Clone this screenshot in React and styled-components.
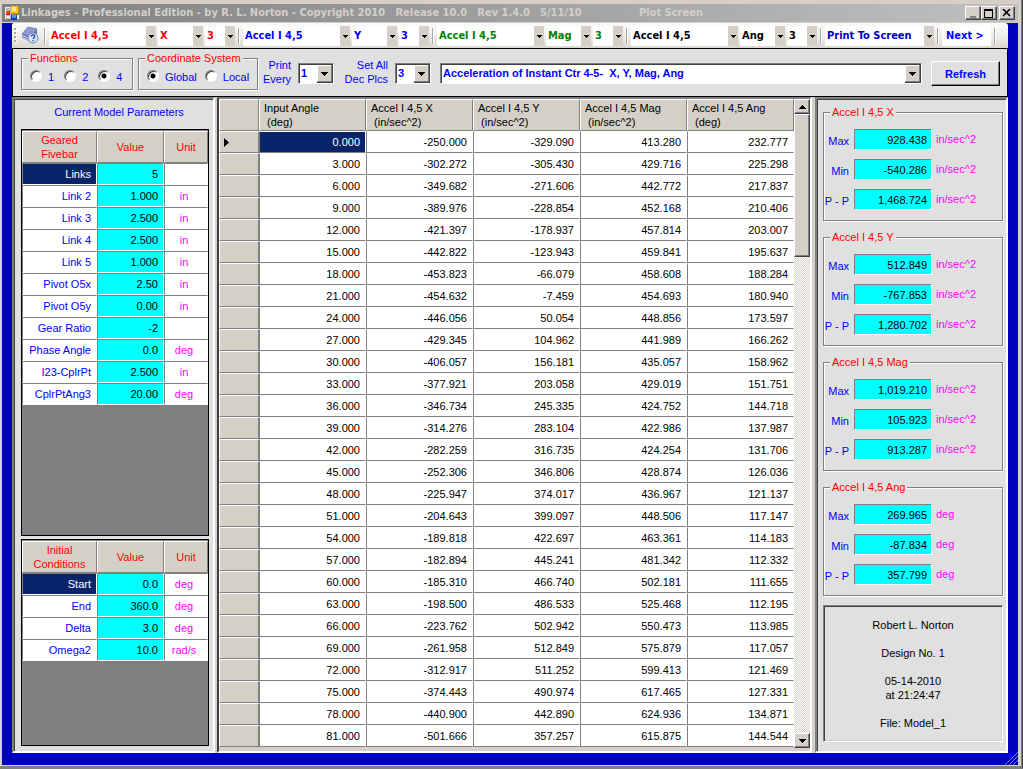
import React from 'react';
import styled, { createGlobalStyle } from 'styled-components';

const c = {
  face: '#d4d0c8', panel: '#e0e0e0', blue: '#0000c0', ink: '#0000ff', gray: '#808080',
  dark: '#404040', navy: '#0a246a', cyan: '#00ffff', red: '#ff0000', unit: '#ff00ff',
};
const ui = '"Liberation Sans", Arial, sans-serif';
const tahoma = '"DejaVu Sans Condensed", "DejaVu Sans", sans-serif';

const Global = createGlobalStyle`
  *, *::before, *::after { box-sizing: border-box; }
  body { margin: 0; font: 11px/14px ${ui}; color: #000; background: ${c.face}; }
  input, select, button { font: inherit; color: inherit; margin: 0; border-radius: 0; }
`;

const Window = styled.div`
  min-height: 100vh;
  display: flex;
  flex-direction: column;
  background: ${c.face};
  border-right: 1px solid ${c.dark};
  border-bottom: 2px solid ${c.gray};
  padding: 1px 4px 2px 2px;
  box-shadow: inset -1px -1px 0 ${c.gray};
`;
const TitleBar = styled.header`
  display: flex;
  align-items: center;
  height: 18px;
  margin-top: 3px;
  padding: 0 3px;
  background: linear-gradient(to right, #808080, #c0c0c0);
  color: ${c.face};
  font: bold 11px/18px ${tahoma};
  white-space: pre;
`;
const AppTitle = styled.h1`
  margin: 0 0 0 2px;
  width: 618px;
  font: inherit;
  font-size: 11px;
`;
const ScreenTitle = styled.span`
  flex: 1;
`;
const WinButton = styled.button`
  display: grid;
  place-items: center;
  width: 16px;
  height: 14px;
  padding: 0;
  margin-left: ${(p) => (p.$apart ? 2 : 0)}px;
  color: #000;
  background: ${c.face};
  border: 1px solid;
  border-color: #fff ${c.dark} ${c.dark} #fff;
  box-shadow: inset -1px -1px 0 ${c.gray};
`;
const Frame = styled.div`
  flex: 1;
  display: flex;
  flex-direction: column;
  position: relative;
  padding: 0 10px 12px;
  background: ${c.blue};
  margin-top: 1px;
`;
const ResizeGrip = styled.svg`
  position: absolute;
  right: 0;
  bottom: 0;
`;
const ToolBar = styled.nav`
  display: flex;
  align-items: center;
  height: 25px;
  padding-left: 2px;
  overflow: hidden;
  border-radius: 2px 3px 0 0;
  background: linear-gradient(#fafaf9, #f0efea 50%, #dad7cf);
  font: bold 11px/20px ${tahoma};
`;
const HelpButton = styled.button`
  display: flex;
  width: 20px;
  height: 20px;
  padding: 0;
  margin-left: 3px;
  border: 0;
  background: none;
`;
const Separator = styled.span`
  flex: none;
  width: 2px;
  height: 16px;
  margin: 0 3px;
  background: #a6a6a6;
  border-right: 1px solid #fff;
`;
const ToolGroup = styled.div`
  display: flex;
  gap: 2px;
  color: ${(p) => p.$color};
`;
const FlatCombo = styled.span`
  display: grid;
  width: ${(p) => p.$w}px;
  height: 20px;
  background: #fff;
  select, svg { grid-area: 1 / 1; }
  select {
    appearance: none;
    width: 100%;
    height: 20px;
    padding: 0 12px 0 2px;
    border: 0;
    background: none;
  }
  svg { justify-self: end; pointer-events: none; }
`;
const NextButton = styled.button`
  width: 49px;
  height: 21px;
  padding: 0 0 0 4px;
  text-align: left;
  border: 0;
  background: #fff;
  color: ${c.ink};
`;
const Options = styled.section`
  display: flex;
  align-items: flex-start;
  height: 49px;
  padding: 2px 7px 0 8px;
  background: ${c.panel};
  border: 1px solid #000;
  color: ${c.ink};
`;
const Group = styled.fieldset`
  min-width: 0;
  margin: 0;
  padding: 0;
  border: 1px solid ${c.gray};
  box-shadow: 1px 1px 0 #fff, inset 1px 1px 0 #fff;
  legend {
    margin-left: 6px;
    padding: 0 2px;
    color: ${c.red};
    background: ${c.panel};
    line-height: 14px;
  }
`;
const RadioGroup = styled(Group)`
  width: ${(p) => p.$w}px;
  height: 39px;
  margin-right: 5px;
`;
const RadioRow = styled.div`
  display: flex;
  gap: ${(p) => p.$gap}px;
  padding: 3px 0 0 8px;
`;
const Radio = styled.label`
  display: flex;
  align-items: center;
  gap: 6px;
  input {
    appearance: none;
    width: 12px;
    height: 12px;
    border-radius: 50%;
    border: 1px solid;
    border-color: ${c.gray} #fff #fff ${c.gray};
    background: #fff;
    box-shadow: inset 1px 1px 0 ${c.dark};
  }
  input:checked { background: radial-gradient(circle, #000 2px, #fff 3px); }
  span { padding-top: 2px; }
`;
const SideLabel = styled.label`
  width: ${(p) => p.$w}px;
  padding-top: 7px;
  margin-right: 7px;
  text-align: right;
`;
const Combo = styled.span`
  display: grid;
  flex: ${(p) => (p.$w ? `none` : `1`)};
  width: ${(p) => (p.$w ? `${p.$w}px` : `auto`)};
  height: 21px;
  margin: 12px 9px 0 0;
  background: #fff;
  border: 1px solid;
  border-color: ${c.gray} #fff #fff ${c.gray};
  box-shadow: inset 1px 1px 0 ${c.dark};
  font-weight: bold;
  select, svg { grid-area: 1 / 1; }
  select {
    appearance: none;
    width: 100%;
    height: 18px;
    padding: 0 16px 0 2px;
    border: 0;
    background: none;
    white-space: pre;
  }
  svg { justify-self: end; align-self: center; pointer-events: none; }
`;
const RefreshButton = styled.button`
  width: 69px;
  height: 25px;
  margin-top: 10px;
  padding: 0;
  font-weight: bold;
  background: ${c.panel};
  border: 1px solid;
  border-color: #fff #000 #000 #fff;
  box-shadow: inset -1px -1px 0 ${c.gray};
`;
const Body = styled.main`
  flex: 1;
  display: flex;
  gap: 2px;
  background: ${c.face};
`;
const Panel = styled.section`
  display: flex;
  flex-direction: column;
  width: ${(p) => p.$w}px;
  background: ${c.panel};
  border: 2px solid;
  border-color: ${c.gray} #fff #fff ${c.gray};
  box-shadow: inset 1px 1px 0 ${c.dark};
`;
const LeftPanel = styled(Panel)`
  padding: 0 4px 5px 7px;
  h2 {
    margin: 0;
    padding: 6px 0 10px 8px;
    font: inherit;
    text-align: center;
    color: ${c.ink};
  }
`;
const GridBox = styled.div`
  flex: ${(p) => (p.$grow ? `1` : `0 0 207px`)};
  margin-bottom: ${(p) => (p.$grow ? 3 : 0)}px;
  background: ${c.gray};
  border: 1px solid #000;
  padding-top: 1px;
`;
const Table = styled.table`
  width: 100%;
  table-layout: fixed;
  border-collapse: separate;
  border-spacing: 0;
`;
const Head = styled.th`
  height: 32px;
  padding: ${(p) => (p.$left ? `0 0 0 4px` : `0`)};
  font-weight: normal;
  text-align: ${(p) => (p.$left ? `left` : `center`)};
  white-space: pre;
  color: ${(p) => (p.$left ? `#000` : c.red)};
  background: ${c.face};
  border: 1px solid;
  border-color: #fff ${c.gray} ${c.gray} #fff;
`;
const cell = `
  height: 22px;
  font-weight: normal;
  border: 1px solid;
`;
const Name = styled.th`
  ${cell}
  padding: 0 5px 0 0;
  text-align: right;
  color: ${(p) => (p.$on ? `#fff` : c.ink)};
  background: ${(p) => (p.$on ? c.navy : `#fff`)};
  border-color: ${c.gray} #fff #fff ${c.gray};
`;
const Value = styled.td`
  ${cell}
  padding: 0 5px 0 0;
  text-align: right;
  background: ${c.cyan};
  border-color: ${c.gray} #fff #fff ${c.gray};
`;
const Unit = styled.td`
  ${cell}
  padding: 0 4px 0 0;
  text-align: center;
  color: ${c.unit};
  background: #fff;
  border-color: ${c.gray} #fff #fff ${c.gray};
`;
const DataPanel = styled.section`
  flex: 1;
  display: flex;
  align-items: flex-start;
  background: ${c.face};
  border: 2px solid;
  border-color: ${c.gray} #fff #fff ${c.dark};
  padding-bottom: 3px;
  margin-right: 1px;
`;
const DataTable = styled(Table)`
  flex: 1;
  min-width: 0;
`;
const RowHead = styled.th`
  ${cell}
  padding: 0 0 0 3px;
  text-align: left;
  line-height: 8px;
  background: ${c.face};
  border-color: #fff ${c.gray} ${c.gray} #fff;
`;
const Data = styled.td`
  ${cell}
  padding: 0 5px 0 0;
  text-align: right;
  color: ${(p) => (p.$on ? `#fff` : `#000`)};
  background: ${(p) => (p.$on ? c.navy : `#fff`)};
  border-color: #fff #fff ${c.gray} ${c.gray};
`;
const ScrollBar = styled.div`
  align-self: stretch;
  display: flex;
  flex: none;
  flex-direction: column;
  width: 16px;
  background: repeating-conic-gradient(#fff 0 25%, ${c.face} 0 50%) 0 0 / 2px 2px;
`;
const raised = `
  background: ${c.face};
  border: 1px solid;
  border-color: #fff ${c.dark} ${c.dark} #fff;
  box-shadow: inset -1px -1px 0 ${c.gray};
`;
const ScrollButton = styled.button`
  ${raised}
  display: grid;
  place-items: center;
  width: 16px;
  height: 15px;
  padding: 0;
`;
const Thumb = styled.div`
  ${raised}
  height: 143px;
  margin-bottom: auto;
`;
const RightPanel = styled(Panel)`
  padding: 6px 3px 9px 6px;
`;
const StatGroup = styled(Group)`
  height: 116px;
  margin-bottom: 9px;
`;
const StatRow = styled.div`
  display: grid;
  grid-template-columns: 26px 78px 1fr;
  column-gap: 4px;
  padding-top: 9px;
  &:first-of-type { padding-top: 10px; }
  label {
    display: flex;
    justify-content: flex-end;
    padding: 5px 1px 0 0;
    white-space: nowrap;
    color: ${c.ink};
  }
  input {
    width: 78px;
    height: 21px;
    padding: 0 4px;
    text-align: right;
    background: ${c.cyan};
    border: 1px solid;
    border-color: ${c.gray} #fff #fff ${c.gray};
  }
  span {
    padding-top: 3px;
    color: ${c.unit};
  }
`;
const Info = styled.address`
  flex: 1;
  padding: 12px 0 6px;
  font-style: normal;
  text-align: center;
  border: 1px solid;
  border-color: ${c.gray} #fff #fff ${c.gray};
  box-shadow: inset 1px 1px 0 ${c.dark}, inset -1px -1px 0 ${c.face};
  p { margin: 0 0 14px; }
  p:last-child { margin: 0; }
`;

const FlatArrow = () => (
  <svg width="10" height="20" shapeRendering="crispEdges">
    <rect width="10" height="20" fill={c.face} />
    <path d="M3 9h5v1h-1v1h-1v1h-1v-1h-1v-1h-1z" />
  </svg>
);
const ComboArrow = () => (
  <svg width="16" height="18" shapeRendering="crispEdges">
    <rect width="16" height="18" fill={c.dark} />
    <rect width="15" height="17" fill="#808080" />
    <rect width="14" height="16" fill="#fff" />
    <rect x="1" y="1" width="13" height="15" fill={c.face} />
    <path d="M4 7h7v1h-1v1h-1v1h-1v1h-1v-1h-1v-1h-1v-1h-1z" />
  </svg>
);
const Triangle = ({ up }) => (
  <svg width="7" height="4" shapeRendering="crispEdges">
    <path d={up ? 'M3 0h1v1h1v1h1v1h1v1h-7v-1h1v-1h1v-1h1z' : 'M0 0h7v1h-1v1h-1v1h-1v1h-1v-1h-1v-1h-1v-1h-1z'} />
  </svg>
);

const AppIcon = () => (
  <svg width="14" height="14" shapeRendering="crispEdges">
    <path d="M0 1h6v12h-6z" fill="#b8b8b8" />
    <path d="M0 1h5v1h-4v11h-1z" fill="#f4f4f4" />
    <rect x="1" y="5" width="4" height="4" fill="#c01808" />
    <rect x="1" y="5" width="3" height="3" fill="#f04828" />
    <rect x="2" y="10" width="3" height="2" fill="#f0f0f0" />
    <rect x="6" y="0" width="8" height="8" fill="#c88c00" />
    <rect x="6" y="0" width="7" height="7" fill="#fcc020" />
    <rect x="7" y="1" width="4" height="4" fill="#ffe888" />
    <rect x="6" y="9" width="6" height="5" fill="#1038b0" />
    <rect x="7" y="9" width="4" height="3" fill="#5090f0" />
    <path d="M12 9h2v4h-2z" fill="#f4f4f4" />
  </svg>
);
const HelpIcon = () => (
  <svg width="18" height="18" viewBox="0 0 18 18">
    <path d="M1 8l6-7 9 2v6l-6 7-9-4z" fill="#6670b4" />
    <path d="M1 8l6-7 9 2-6 8z" fill="#9098d0" stroke="#7078b8" strokeWidth=".7" />
    <path d="M1 9.500l8 3M1 11.500l8 3" fill="none" stroke="#dfe3f6" strokeWidth=".9" />
    <circle cx="12" cy="12" r="5" fill="#dce8fa" stroke="#6484c4" />
    <path d="M10.400 10.600c0-2.200 3.300-2.100 3.300-.2 0 1.300-1.600 1.200-1.600 2.600M12.100 14v1.200" fill="none" stroke="#203c90" strokeWidth="1.300" />
  </svg>
);
const Grip = () => (
  <svg width="4" height="18" shapeRendering="crispEdges">
    {[1, 5, 9, 13].map((y) => (
      <g key={y}>
        <rect x="1" y={y + 1} width="2" height="2" fill="#fff" />
        <rect y={y} width="2" height="2" fill="#a8a69f" />
      </g>
    ))}
  </svg>
);

const FlatSelect = ({ w, label, value }) => (
  <FlatCombo $w={w}>
    <select aria-label={label} defaultValue={value}><option>{value}</option></select>
    <FlatArrow />
  </FlatCombo>
);

const plots = [['X', '#ff0000'], ['Y', '#0000ff'], ['Mag', '#008000'], ['Ang', '#000000']];

const params = [
  ['Links', '5', ''], ['Link 2', '1.000', 'in'], ['Link 3', '2.500', 'in'], ['Link 4', '2.500', 'in'],
  ['Link 5', '1.000', 'in'], ['Pivot O5x', '2.50', 'in'], ['Pivot O5y', '0.00', 'in'],
  ['Gear Ratio', '-2', ''], ['Phase Angle', '0.0', 'deg'], ['I23-CplrPt', '2.500', 'in'],
  ['CplrPtAng3', '20.00', 'deg'],
];
const initial = [['Start', '0.0', 'deg'], ['End', '360.0', 'deg'], ['Delta', '3.0', 'deg'], ['Omega2', '10.0', 'rad/s']];

const data = `-250.000 -329.090 413.280 232.777
-302.272 -305.430 429.716 225.298
-349.682 -271.606 442.772 217.837
-389.976 -228.854 452.168 210.406
-421.397 -178.937 457.814 203.007
-442.822 -123.943 459.841 195.637
-453.823 -66.079 458.608 188.284
-454.632 -7.459 454.693 180.940
-446.056 50.054 448.856 173.597
-429.345 104.962 441.989 166.262
-406.057 156.181 435.057 158.962
-377.921 203.058 429.019 151.751
-346.734 245.335 424.752 144.718
-314.276 283.104 422.986 137.987
-282.259 316.735 424.254 131.706
-252.306 346.806 428.874 126.036
-225.947 374.017 436.967 121.137
-204.643 399.097 448.506 117.147
-189.818 422.697 463.361 114.183
-182.894 445.241 481.342 112.332
-185.310 466.740 502.181 111.655
-198.500 486.533 525.468 112.195
-223.762 502.942 550.473 113.985
-261.958 512.849 575.879 117.057
-312.917 511.252 599.413 121.469
-374.443 490.974 617.465 127.331
-440.900 442.890 624.936 134.871
-501.666 357.257 615.875 144.544`.split('\n').map((r, i) => [(i * 3).toFixed(3), ...r.split(' ')]);

const headings = [
  'Input Angle\n (deg)', 'Accel I 4,5 X\n (in/sec^2)', 'Accel I 4,5 Y\n (in/sec^2)',
  'Accel I 4,5 Mag\n (in/sec^2)', 'Accel I 4,5 Ang\n (deg)',
];
const stats = [
  ['X', 'in/sec^2', '928.438', '-540.286', '1,468.724'],
  ['Y', 'in/sec^2', '512.849', '-767.853', '1,280.702'],
  ['Mag', 'in/sec^2', '1,019.210', '105.923', '913.287'],
  ['Ang', 'deg', '269.965', '-87.834', '357.799'],
];

const ParamTable = ({ title, rows, grow }) => (
  <GridBox $grow={grow}>
    <Table>
      <colgroup><col width="75" /><col width="67" /><col /></colgroup>
      <thead><tr><Head>{title}</Head><Head>Value</Head><Head>Unit</Head></tr></thead>
      <tbody>
        {rows.map(([n, v, u], i) => (
          <tr key={n}><Name scope="row" $on={i === 0}>{n}</Name><Value>{v}</Value><Unit>{u}</Unit></tr>
        ))}
      </tbody>
    </Table>
  </GridBox>
);

export default function App() {
  return (
    <>
      <Global />
      <Window>
        <TitleBar>
          <AppIcon />
          <AppTitle>{'Linkages - Professional Edition - by R. L. Norton - Copyright 2010   Release 10.0   Rev 1.4.0   5/11/10'}</AppTitle>
          <ScreenTitle>Plot Screen</ScreenTitle>
          <WinButton aria-label="Minimize"><svg width="10" height="9"><path d="M2 7h6v2h-6z" fill="#808080" /></svg></WinButton>
          <WinButton aria-label="Maximize"><svg width="10" height="9" shapeRendering="crispEdges"><path d="M0 0h9v9h-9zM1 2v6h7v-6z" fillRule="evenodd" /></svg></WinButton>
          <WinButton aria-label="Close" $apart><svg width="10" height="8"><path d="M1 0l7 7M8 0l-7 7" stroke="#000" strokeWidth="1.600" /></svg></WinButton>
        </TitleBar>
        <Frame>
          <ToolBar>
            <Grip />
            <HelpButton aria-label="Help"><HelpIcon /></HelpButton>
            {plots.map(([axis, color]) => (
              <React.Fragment key={axis}>
                <Separator />
                <ToolGroup $color={color}>
                  <FlatSelect w={107} label={`${axis} plot`} value="Accel I 4,5" />
                  <FlatSelect w={45} label={`${axis} component`} value={axis} />
                  <FlatSelect w={30} label={`${axis} decimals`} value="3" />
                </ToolGroup>
              </React.Fragment>
            ))}
            <Separator />
            <ToolGroup $color={c.blue}><FlatSelect w={109} label="Output" value="Print To Screen" /></ToolGroup>
            <Separator />
            <NextButton>{'Next >'}</NextButton>
            <Separator />
          </ToolBar>
          <Options>
            <RadioGroup $w={112}>
              <legend>Functions</legend>
              <RadioRow $gap={10}>
                {['1', '2', '4'].map((n) => (
                  <Radio key={n}><input type="radio" name="functions" defaultChecked={n === '4'} /><span>{n}</span></Radio>
                ))}
              </RadioRow>
            </RadioGroup>
            <RadioGroup $w={120}>
              <legend>Coordinate System</legend>
              <RadioRow $gap={8}>
                {['Global', 'Local'].map((n) => (
                  <Radio key={n}><input type="radio" name="system" defaultChecked={n === 'Global'} /><span>{n}</span></Radio>
                ))}
              </RadioRow>
            </RadioGroup>
            <SideLabel htmlFor="every" $w={28}>Print Every</SideLabel>
            <Combo $w={36}><select id="every"><option>1</option></select><ComboArrow /></Combo>
            <SideLabel htmlFor="places" $w={45}>Set All Dec Plcs</SideLabel>
            <Combo $w={36}><select id="places"><option>3</option></select><ComboArrow /></Combo>
            <Combo>
              <select aria-label="Plotted function"><option>{'Acceleration of Instant Ctr 4-5-\u00a0 X, Y, Mag, Ang'}</option></select>
              <ComboArrow />
            </Combo>
            <RefreshButton>Refresh</RefreshButton>
          </Options>
          <Body>
            <LeftPanel $w={203}>
              <h2>Current Model Parameters</h2>
              <ParamTable title={'Geared\nFivebar'} rows={params} grow />
              <ParamTable title={'Initial\nConditions'} rows={initial} />
            </LeftPanel>
            <DataPanel>
              <DataTable>
                <colgroup><col width="40" /></colgroup>
                <thead>
                  <tr><Head $left />{headings.map((h) => <Head key={h} $left>{h}</Head>)}</tr>
                </thead>
                <tbody>
                  {data.map((row, i) => (
                    <tr key={row[0]}>
                      <RowHead scope="row">
                        {i === 0 && <svg width="6" height="9" aria-label="Current row"><path d="M1 0l5 4.500-5 4.500z" /></svg>}
                      </RowHead>
                      {row.map((v, j) => <Data key={j} $on={i === 0 && j === 0}>{v}</Data>)}
                    </tr>
                  ))}
                </tbody>
              </DataTable>
              <ScrollBar>
                <ScrollButton aria-label="Scroll up"><Triangle up /></ScrollButton>
                <Thumb />
                <ScrollButton aria-label="Scroll down"><Triangle /></ScrollButton>
              </ScrollBar>
            </DataPanel>
            <RightPanel $w={193}>
              {stats.map(([axis, unit, ...values]) => (
                <StatGroup key={axis}>
                  <legend>Accel I 4,5 {axis}</legend>
                  {['Max', 'Min', 'P - P'].map((n, i) => (
                    <StatRow key={n}>
                      <label htmlFor={`${axis}-${i}`}>{n}</label>
                      <input id={`${axis}-${i}`} readOnly value={values[i]} />
                      <span>{unit}</span>
                    </StatRow>
                  ))}
                </StatGroup>
              ))}
              <Info>
                <p>Robert L. Norton</p>
                <p>Design No. 1</p>
                <p>05-14-2010<br />at 21:24:47</p>
                <p>File: Model_1</p>
              </Info>
            </RightPanel>
          </Body>
          <ResizeGrip width="14" height="14"><path d="M1 14L14 1M5 14l9-9M9 14l5-5" stroke="#7080d8" /><path d="M3 14L14 3M7 14l7-7M11 14l3-3" stroke="#000050" /></ResizeGrip>
        </Frame>
      </Window>
    </>
  );
}
